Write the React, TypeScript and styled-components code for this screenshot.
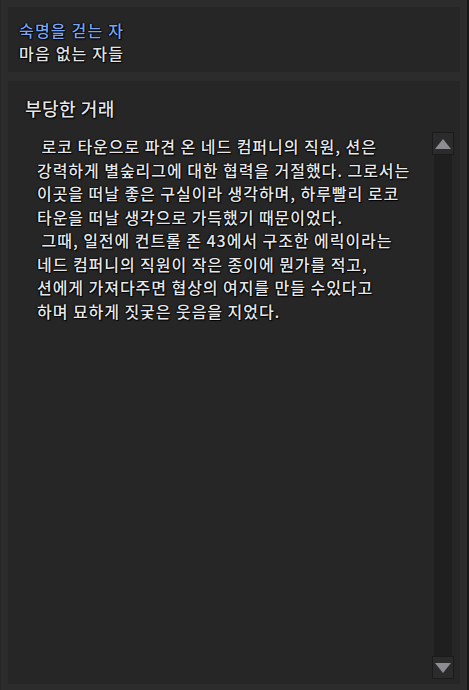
import React from 'react';
import styled, { createGlobalStyle } from 'styled-components';

const GlobalStyle = createGlobalStyle`
  html, body {
    margin: 0;
    padding: 0;
    background: #2c2c2c;
  }
`;

const lines = [
  ' 로코 타운으로 파견 온 네드 컴퍼니의 직원, 션은',
  '강력하게 별숲리그에 대한 협력을 거절했다. 그로서는',
  '이곳을 떠날 좋은 구실이라 생각하며, 하루빨리 로코',
  '타운을 떠날 생각으로 가득했기 때문이었다.',
  ' 그때, 일전에 컨트롤 존 43에서 구조한 에릭이라는',
  '네드 컴퍼니의 직원이 작은 종이에 뭔가를 적고,',
  '션에게 가져다주면 협상의 여지를 만들 수있다고',
  '하며 묘하게 짓궂은 웃음을 지었다.',
];

export default function App() {
  return (
    <>
      <GlobalStyle />
      <Frame>
        <Header>
          <HeaderLine $accent>숙명을 걷는 자</HeaderLine>
          <HeaderLine>마음 없는 자들</HeaderLine>
        </Header>
        <Content>
          <Article>
            <Title>부당한 거래</Title>
            <Body>
              {lines.map((l, i) => (
                <Line key={i}>{l}</Line>
              ))}
            </Body>
          </Article>
          <Scrollbar>
            <ScrollButton>
              <Arrow viewBox="0 0 16 10">
                <polygon points="8,0 16,10 0,10" />
              </Arrow>
            </ScrollButton>
            <Track />
            <ScrollButton>
              <Arrow viewBox="0 0 16 10">
                <polygon points="0,0 16,0 8,10" />
              </Arrow>
            </ScrollButton>
          </Scrollbar>
        </Content>
      </Frame>
    </>
  );
}

// общая рамка окна
const Frame = styled.div`
  width: 469px;
  height: 690px;
  box-sizing: border-box;
  padding: 7px 7px 6px 7px;
  border-right: 2px solid #171717;
  border-left: 1px solid #262626;
  display: flex;
  flex-direction: column;
  gap: 9px;
  font-family: "Noto Sans CJK KR", "Noto Sans", sans-serif;
  font-weight: 500;
  text-shadow: 0 0 2px #000, 1px 1px 1px #000, -1px 0 1px #000;
`;

const Header = styled.div`
  height: 65px;
  box-sizing: border-box;
  background: #262626;
  padding: 12px 11px 0;
  display: flex;
  flex-direction: column;
`;

const HeaderLine = styled.div<{ $accent?: boolean }>`
  font-size: 16px;
  line-height: 23px;
  letter-spacing: 1.2px;
  color: ${(p) => (p.$accent ? '#79a6f2' : '#e4e4e4')};
`;

const Content = styled.div`
  flex: 1;
  background: #262626;
  display: flex;
  padding: 0 6px 5px 0;
`;

const Article = styled.div`
  flex: 1;
  padding: 15px 0 0 17px;
`;

const Title = styled.div`
  font-size: 18px;
  line-height: 24px;
  letter-spacing: 0.5px;
  color: #e6e6e6;
  margin-bottom: 15px;
`;

const Body = styled.div`
  padding-left: 12px;
`;

const Line = styled.div`
  font-size: 16px;
  line-height: 23.5px;
  letter-spacing: 0.95px;
  color: #e8e8e8;
  white-space: pre;
`;

const Scrollbar = styled.div`
  width: 22px;
  margin-top: 51px;
  display: flex;
  flex-direction: column;
  align-items: center;
`;

const ScrollButton = styled.div`
  width: 22px;
  height: 23px;
  box-sizing: border-box;
  border: 1px solid #1b1b1b;
  background: #2b2b2b;
  display: flex;
  align-items: center;
  justify-content: center;
`;

const Arrow = styled.svg`
  width: 16px;
  height: 10px;
  fill: #8d8b94;
`;

const Track = styled.div`
  flex: 1;
  width: 18px;
  background: #1f1f1f;
`;
